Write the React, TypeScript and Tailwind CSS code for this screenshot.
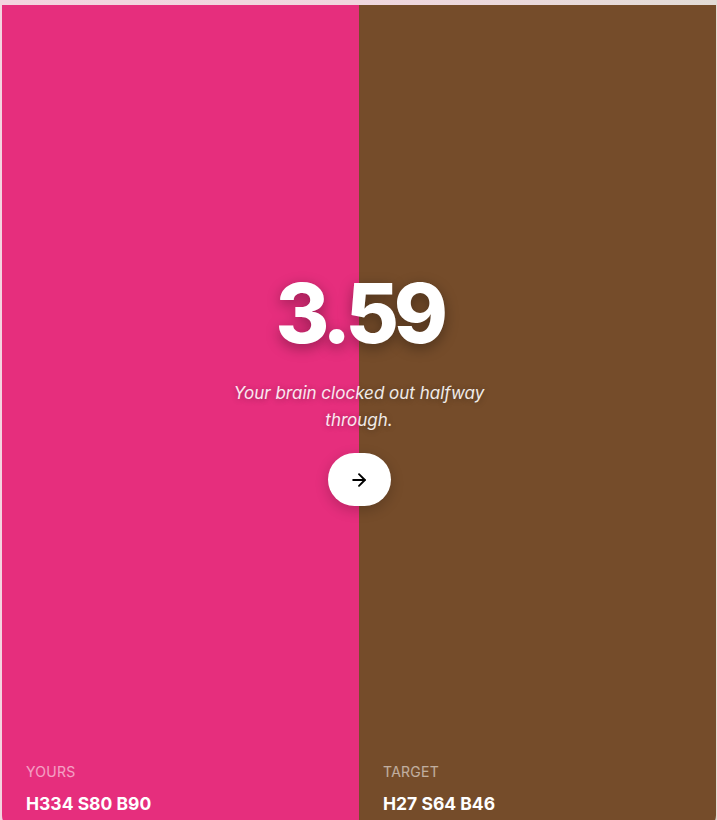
import { ArrowRight } from "lucide-react";

// Colour swatches compared side by side
const swatches = [
  { label: "Yours", value: "H334 S80 B90", bg: "bg-[#e62e7d]" },
  { label: "Target", value: "H27 S64 B46", bg: "bg-[#754c2a]" },
];

export default function App() {
  return (
    <div className="h-[820px] overflow-hidden bg-gradient-to-r from-[#f3d3df] via-[#f0d6de] to-[#e3dcd6] pt-[5px] pl-[2px] pr-[1px] font-['Inter',sans-serif]">
      {/* Result card */}
      <div className="relative h-[826px] overflow-hidden rounded-b-2xl">
        <div className="grid h-full grid-cols-2">
          {swatches.map((s) => (
            <div key={s.label} className={`${s.bg} flex flex-col justify-end px-6 pb-[15px]`}>
              <div className="text-[14px] uppercase tracking-[0.02em] text-white/55">{s.label}</div>
              <div className="mt-[10px] text-[17.5px] font-bold leading-6 text-white">{s.value}</div>
            </div>
          ))}
        </div>

        {/* Score overlay */}
        <div className="absolute inset-x-0 top-[259px] flex flex-col items-center text-center">
          <div className="text-[82px] font-extrabold leading-[100px] tracking-[-0.065em] text-white [text-shadow:0_4px_14px_rgba(0,0,0,0.35)]">
            3.59
          </div>
          <p className="mt-[16px] w-[270px] text-[17px] italic leading-[27px] text-white/90 [text-shadow:0_1px_6px_rgba(0,0,0,0.3)]">
            Your brain clocked out halfway through.
          </p>
          <button className="mt-[19px] flex h-[53px] w-[63px] items-center justify-center rounded-full bg-white shadow-[0_4px_14px_rgba(0,0,0,0.2)]">
            <ArrowRight className="h-5 w-5 text-black" strokeWidth={2.25} />
          </button>
        </div>
      </div>
    </div>
  );
}
